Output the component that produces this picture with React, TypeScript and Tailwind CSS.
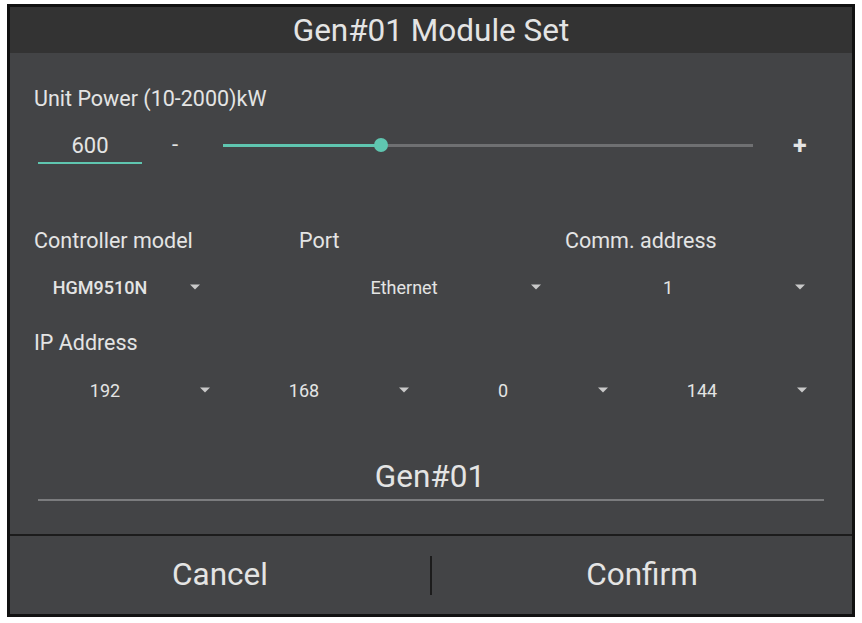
const font = { fontFamily: "Roboto, 'Liberation Sans', sans-serif" };

const Arrow = () => (
  <svg width="12" height="6" viewBox="0 0 12 6" className="shrink-0">
    <path d="M1 0.5h10L6 5.5z" fill="#c9c9c9" />
  </svg>
);

export default function App() {
  const ip = ["192", "168", "0", "144"];
  return (
    <div className="w-[862px] h-[623px] bg-white overflow-hidden pt-[4px] pl-[7px]" style={font}>
      <div className="w-[848px] h-[613px] border-[3px] border-[#111] bg-[#434446] flex flex-col text-[#e4e4e4]">
        {/* Title */}
        <div className="h-[46px] shrink-0 bg-[#333333] flex items-center justify-center text-[31.5px] leading-none pt-[2px]">
          Gen#01 Module Set
        </div>

        {/* Body */}
        <div className="flex-1 flex flex-col px-[24px]">
          <div className="mt-[31px] h-[30px] flex items-center text-[21.5px]">Unit Power (10-2000)kW</div>

          <div className="mt-[11px] h-[40px] flex items-center">
            <div className="ml-[4px] w-[104px] h-[40px] flex flex-col">
              <div className="h-[37px] flex items-center justify-center text-[22px] pt-[3px]">600</div>
              <div className="h-[2px] bg-[#5fc6b0]" />
            </div>
            <div className="ml-[30px] w-[8px] text-[22px] leading-none">-</div>
            <div className="ml-[43px] w-[530px] h-[14px] relative flex items-center">
              <div className="h-[3px] w-[158px] bg-[#5fc6b0]" />
              <div className="h-[3px] flex-1 bg-[#6f7072]" />
              <div className="absolute left-[151px] top-0 w-[14px] h-[14px] rounded-full bg-[#5fc6b0]" />
            </div>
            <div className="ml-[40px] text-[25px] leading-none font-bold">+</div>
          </div>

          <div className="mt-[60px] h-[30px] grid grid-cols-[265px_266px_1fr] items-center text-[21.5px]">
            <div>Controller model</div>
            <div>Port</div>
            <div>Comm. address</div>
          </div>

          <div className="mt-[17px] h-[30px] grid grid-cols-[265px_266px_1fr] items-center text-[18px]">
            <div className="flex items-center">
              <span className="w-[132px] text-center font-medium">HGM9510N</span>
              <span className="ml-[23px]"><Arrow /></span>
            </div>
            <div className="flex items-center">
              <span className="w-[210px] text-center">Ethernet</span>
              <span className="ml-[21px]"><Arrow /></span>
            </div>
            <div className="flex items-center">
              <span className="w-[206px] text-center">1</span>
              <span className="ml-[23px]"><Arrow /></span>
            </div>
          </div>

          <div className="mt-[26px] h-[30px] flex items-center text-[21.5px]">IP Address</div>

          <div className="mt-[17px] h-[30px] grid grid-cols-4 items-center w-[796px] text-[18px]">
            {ip.map((v, i) => (
              <div key={i} className="flex items-center">
                <span className="w-[142px] text-center">{v}</span>
                <span className="ml-[23px]"><Arrow /></span>
              </div>
            ))}
          </div>

          <div className="mt-[52px] h-[40px] flex items-center justify-center text-[31.5px] pr-[2px]">Gen#01</div>
          <div className="mt-[2px] ml-[4px] w-[786px] h-[2px] bg-[#7b7c7e]" />
        </div>

        {/* Buttons */}
        <div className="h-[80px] shrink-0 border-t-[2px] border-[#1c1c1c] flex items-center text-[31.5px]">
          <div className="flex-1 text-center">Cancel</div>
          <div className="w-[2px] h-[39px] bg-[#1c1c1c]" />
          <div className="flex-1 text-center">Confirm</div>
        </div>
      </div>
    </div>
  );
}
